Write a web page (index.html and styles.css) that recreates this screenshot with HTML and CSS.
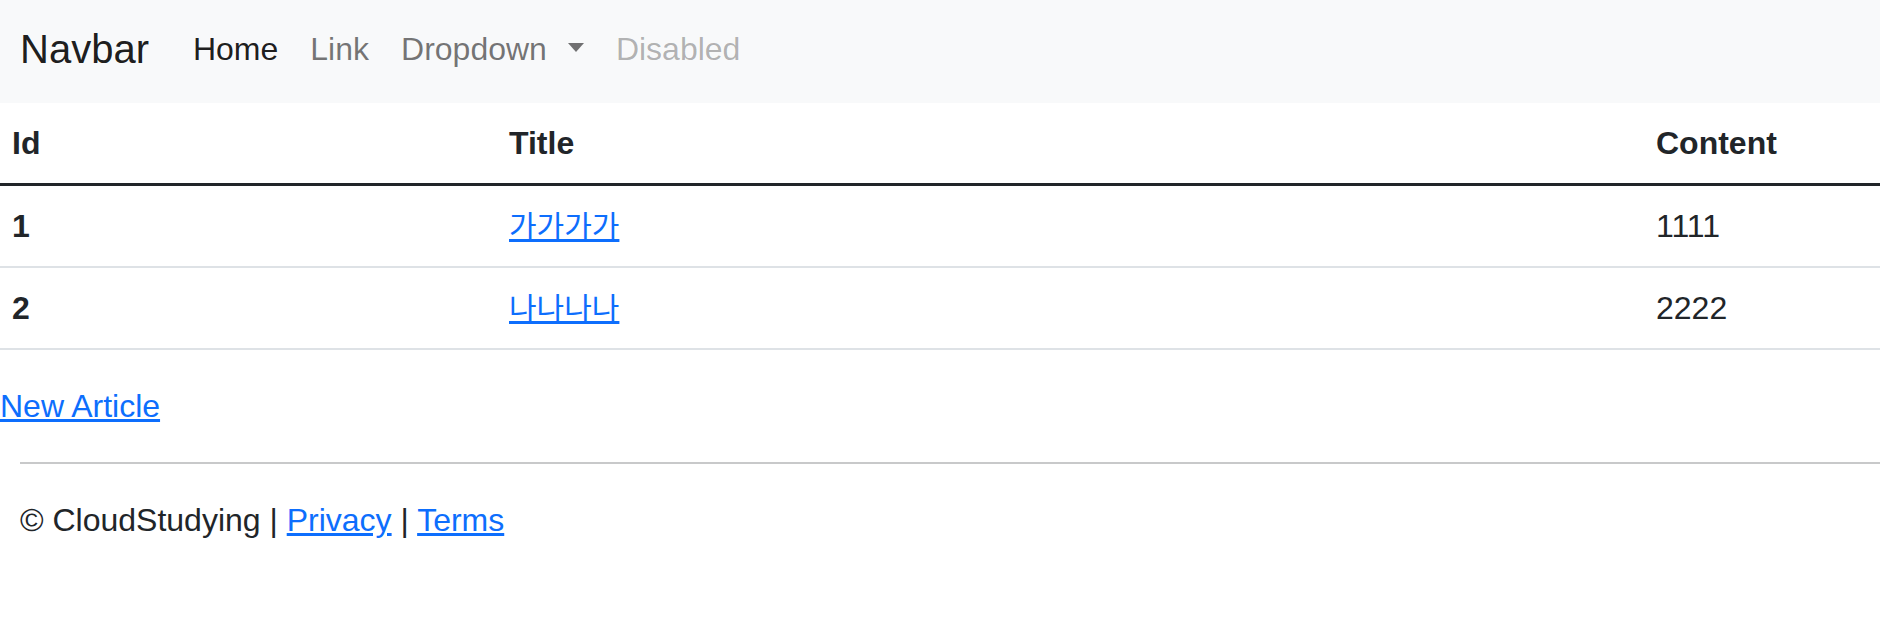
FILE: index.html
```html
<!DOCTYPE html>
<html lang="ko">
<head>
<meta charset="utf-8">
<title>Articles</title>
<link rel="stylesheet" href="styles.css">
</head>
<body>
<header>
  <nav class="navbar">
    <a class="brand" href="#">Navbar</a>
    <ul class="nav">
      <li><a class="nav-link active" href="#">Home</a></li>
      <li><a class="nav-link" href="#">Link</a></li>
      <li><a class="nav-link dropdown" href="#">Dropdown<span class="caret"></span></a></li>
      <li><a class="nav-link disabled" href="#">Disabled</a></li>
    </ul>
  </nav>
</header>
<main>
  <table class="table">
    <colgroup>
      <col class="col-id">
      <col class="col-title">
      <col class="col-content">
    </colgroup>
    <thead>
      <tr><th>Id</th><th>Title</th><th>Content</th></tr>
    </thead>
    <tbody>
      <tr><th>1</th><td><a href="#" class="ko">가가가가</a></td><td>1111</td></tr>
      <tr><th>2</th><td><a href="#" class="ko">나나나나</a></td><td>2222</td></tr>
    </tbody>
  </table>
  <p class="new"><a href="#">New Article</a></p>
</main>
<footer class="footer">
  <hr class="rule">
  <div class="footer-text">© CloudStudying | <a href="#">Privacy</a> | <a href="#">Terms</a></div>
</footer>
</body>
</html>
```
FILE: styles.css
```css
html, body {
  margin: 0;
  padding: 0;
  background: #fff;
}
body {
  font-family: "Liberation Sans", Arial, "Noto Sans CJK KR", sans-serif;
  font-size: 32px;
  line-height: 1.5;
  color: #212529;
}
a {
  color: #0d6efd;
  text-decoration: underline;
}

/* navbar */
.navbar {
  height: 103px;
  box-sizing: border-box;
  padding: 0 0 5px 20px;
  background: #f8f9fa;
  display: flex;
  align-items: center;
}
.brand {
  font-size: 40px;
  line-height: 60px;
  color: rgba(0,0,0,.9);
  text-decoration: none;
  margin-right: 28px;
}
.nav {
  list-style: none;
  margin: 0;
  padding: 0;
  display: flex;
  align-items: center;
}
.nav-link {
  display: flex;
  align-items: center;
  padding: 0 16px;
  line-height: 48px;
  color: rgba(0,0,0,.55);
  text-decoration: none;
}
.nav-link.active { color: rgba(0,0,0,.9); }
.nav-link.disabled { color: rgba(0,0,0,.3); }
.caret {
  display: inline-block;
  margin-left: 21px;
  margin-top: -3px;
  width: 0;
  height: 0;
  border-top: 9px solid rgba(0,0,0,.55);
  border-left: 8.5px solid transparent;
  border-right: 8.5px solid transparent;
}

/* table */
.table {
  width: 100%;
  table-layout: fixed;
  border-collapse: separate;
  border-spacing: 0;
  margin: 0 0 32px 0;
}
.col-id { width: 497px; }
.col-content { width: 236px; }
.table th, .table td {
  height: 48px;
  padding: 16px 12px;
  text-align: left;
  vertical-align: top;
  line-height: 48px;
}
.table th { font-weight: bold; }
.table thead th {
  border-bottom: 3px solid #212529;
}
.table tbody th, .table tbody td {
  border-bottom: 2px solid #dee2e6;
}
.ko {
  font-family: "Noto Sans CJK KR", sans-serif;
  font-size: 30px;
  line-height: 1;
}

.new {
  margin: 0;
  line-height: 48px;
}

/* footer */
.footer {
  padding-left: 20px;
}
.rule {
  margin: 32px 0;
  border: 0;
  border-top: 2px solid #c8c9ca;
  height: 0;
}
.footer-text {
  line-height: 48px;
}
```
